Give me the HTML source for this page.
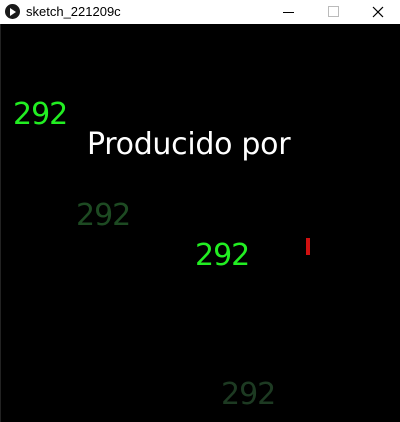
<!DOCTYPE html>
<html><head><meta charset="utf-8"><style>
html,body{margin:0;padding:0;width:400px;height:422px;overflow:hidden;background:#000;font-family:"DejaVu Sans","Liberation Sans",sans-serif}
.tb{position:absolute;left:0;top:0;width:400px;height:24px;background:#fff}
.t{position:absolute;white-space:nowrap;font-size:30px;line-height:30px}
.n{letter-spacing:-1px}
</style></head><body>
<div class="tb">
<div style="position:absolute;left:5px;top:4px;width:15px;height:15px;border-radius:50%;background:#1a1a1a"></div>
<div style="position:absolute;left:10px;top:8px;width:0;height:0;border-left:6px solid #fff;border-top:4px solid transparent;border-bottom:4px solid transparent"></div>
<div style="position:absolute;left:26px;top:4px;font-family:'Liberation Sans',sans-serif;font-size:13px;color:#000">sketch_221209c</div>
<div style="position:absolute;left:283px;top:12px;width:11px;height:1px;background:#000"></div>
<div style="position:absolute;left:328px;top:6px;width:9px;height:9px;border:1px solid #bbb"></div>
<svg style="position:absolute;left:372px;top:6px" width="12" height="12"><path d="M1 1L11 11M11 1L1 11" stroke="#000" stroke-width="1.2"/></svg>
</div>
<div style="position:absolute;left:0;top:24px;width:1px;height:398px;background:#222"></div>
<div class="t n" style="left:13px;top:100px;color:#22ee22">292</div>
<div class="t" style="left:87px;top:130px;color:#fff;letter-spacing:-0.3px">Producido por</div>
<div class="t n" style="left:76px;top:201px;color:#1d4a22">292</div>
<div class="t n" style="left:195px;top:241px;color:#22ee22">292</div>
<div style="position:absolute;left:306px;top:238px;width:4px;height:17px;background:#d01010"></div>
<div class="t n" style="left:221px;top:380px;color:#1d3a22">292</div>
</body></html>
